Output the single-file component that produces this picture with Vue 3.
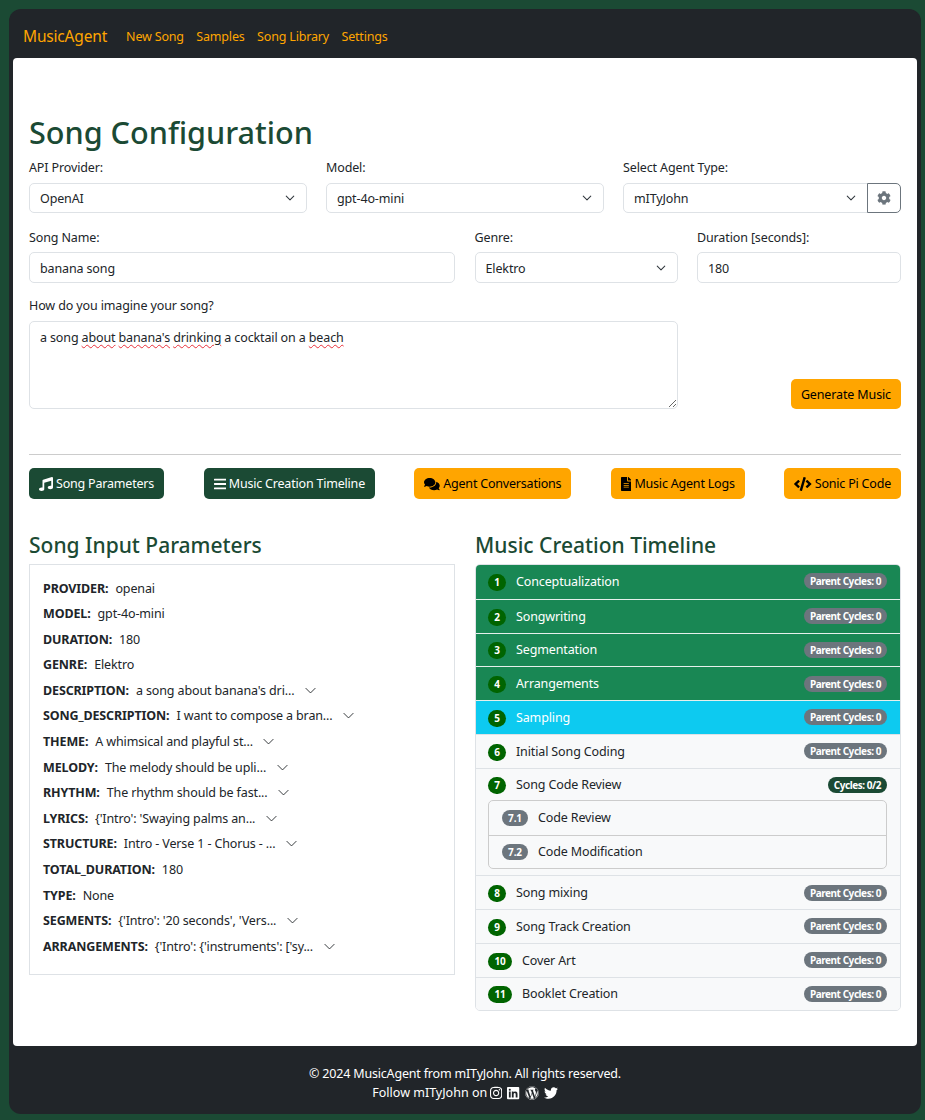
<script setup>
const fa = {
  music: { vb: '0 0 512 512', d: 'M511.99 32.01c0-21.71-21.1-37.01-41.6-30.51L150.4 96c-13.3 4.2-22.4 16.5-22.4 30.5v261.42c-10.05-2.38-20.72-3.92-32-3.92-53.02 0-96 28.65-96 64s42.98 64 96 64 96-28.65 96-64V214.31l256-75.02v184.63c-10.05-2.38-20.72-3.92-32-3.92-53.02 0-96 28.65-96 64s42.98 64 96 64 96-28.65 96-64l-.01-351.99z' },
  bars: { vb: '0 0 448 512', d: 'M16 132h416c8.837 0 16-7.163 16-16V76c0-8.837-7.163-16-16-16H16C7.163 60 0 67.163 0 76v40c0 8.837 7.163 16 16 16zm0 160h416c8.837 0 16-7.163 16-16v-40c0-8.837-7.163-16-16-16H16c-8.837 0-16 7.163-16 16v40c0 8.837 7.163 16 16 16zm0 160h416c8.837 0 16-7.163 16-16v-40c0-8.837-7.163-16-16-16H16c-8.837 0-16 7.163-16 16v40c0 8.837 7.163 16 16 16z' },
  comments: { vb: '0 0 576 512', d: 'M416 192c0-88.4-93.1-160-208-160S0 103.6 0 192c0 34.3 14.1 65.9 38 92-13.4 30.2-35.5 54.2-35.8 54.5-2.2 2.3-2.8 5.7-1.5 8.7S4.8 352 8 352c36.6 0 66.9-12.3 88.7-25 32.2 15.7 70.3 25 111.3 25 114.9 0 208-71.6 208-160zm122 220c23.9-26 38-57.7 38-92 0-66.9-53.5-124.2-129.3-148.1.9 6.6 1.3 13.3 1.3 20.1 0 105.9-107.7 192-240 192-10.8 0-21.3-.8-31.7-1.9C207.8 439.6 281.8 480 368 480c41 0 79.1-9.2 111.3-25 21.8 12.7 52.1 25 88.7 25 3.2 0 6.1-1.9 7.3-4.8 1.3-2.9.7-6.3-1.5-8.7-.3-.3-22.4-24.2-35.8-54.5z' },
  file: { vb: '0 0 384 512', d: 'M224 136V0H24C10.7 0 0 10.7 0 24v464c0 13.3 10.7 24 24 24h336c13.3 0 24-10.7 24-24V160H248c-13.2 0-24-10.8-24-24zm64 236c0 6.6-5.4 12-12 12H108c-6.6 0-12-5.4-12-12v-8c0-6.6 5.4-12 12-12h168c6.6 0 12 5.4 12 12v8zm0-64c0 6.6-5.4 12-12 12H108c-6.6 0-12-5.4-12-12v-8c0-6.6 5.4-12 12-12h168c6.6 0 12 5.4 12 12v8zm0-72v8c0 6.6-5.4 12-12 12H108c-6.6 0-12-5.4-12-12v-8c0-6.6 5.4-12 12-12h168c6.6 0 12 5.4 12 12zm96-114.1v6.1H256V0h6.1c6.4 0 12.5 2.5 17 7l97.9 98c4.5 4.5 7 10.6 7 16.9z' },
  code: { vb: '0 0 640 512', d: 'M278.9 511.5l-61-17.7c-6.4-1.8-10-8.5-8.2-14.9L346.2 8.7c1.8-6.4 8.5-10 14.9-8.2l61 17.7c6.4 1.8 10 8.5 8.2 14.9L293.8 503.3c-1.9 6.4-8.5 10.1-14.9 8.2zm-114-112.2l43.5-46.4c4.6-4.9 4.3-12.7-.8-17.2L117 256l90.6-79.7c5.1-4.5 5.5-12.3.8-17.2l-43.5-46.4c-4.5-4.8-12.1-5.1-17-.5L3.8 247.2c-5.1 4.7-5.1 12.8 0 17.5l144.1 135.1c4.9 4.6 12.5 4.4 17-.5zm327.2.6l144.1-135.1c5.1-4.7 5.1-12.8 0-17.5L492.1 112.1c-4.8-4.5-12.4-4.3-17 .5L431.6 159c-4.6 4.9-4.3 12.7.8 17.2L523 256l-90.6 79.7c-5.1 4.5-5.5 12.3-.8 17.2l43.5 46.4c4.5 4.9 12.1 5.1 17 .6z' },
  cog: { vb: '0 0 512 512', d: 'M487.4 315.7l-42.6-24.6c4.3-23.2 4.3-47 0-70.2l42.6-24.6c4.9-2.8 7.1-8.6 5.5-14-11.1-35.6-30-67.8-54.7-94.6-3.8-4.1-10-5.1-14.8-2.3L380.8 110c-17.9-15.4-38.5-27.3-60.8-35.1V25.8c0-5.6-3.9-10.5-9.4-11.7-36.7-8.2-74.3-7.8-109.2 0-5.5 1.2-9.4 6.1-9.4 11.7V75c-22.2 7.9-42.8 19.8-60.8 35.1L88.7 85.5c-4.9-2.8-11-1.9-14.8 2.3-24.7 26.7-43.6 58.9-54.7 94.6-1.7 5.4.6 11.2 5.5 14L67.3 221c-4.3 23.2-4.3 47 0 70.2l-42.6 24.6c-4.9 2.8-7.1 8.6-5.5 14 11.1 35.6 30 67.8 54.7 94.6 3.8 4.1 10 5.1 14.8 2.3l42.6-24.6c17.9 15.4 38.5 27.3 60.8 35.1v49.2c0 5.6 3.9 10.5 9.4 11.7 36.7 8.2 74.3 7.8 109.2 0 5.5-1.2 9.4-6.1 9.4-11.7v-49.2c22.2-7.9 42.8-19.8 60.8-35.1l42.6 24.6c4.9 2.8 11 1.9 14.8-2.3 24.7-26.7 43.6-58.9 54.7-94.6 1.5-5.5-.7-11.3-5.6-14.1zM256 336c-44.1 0-80-35.9-80-80s35.9-80 80-80 80 35.9 80 80-35.9 80-80 80z' },
  instagram: { vb: '0 0 448 512', d: 'M224.1 141c-63.6 0-114.9 51.3-114.9 114.9s51.3 114.9 114.9 114.9S339 319.5 339 255.9 287.7 141 224.1 141zm0 189.6c-41.1 0-74.7-33.5-74.7-74.7s33.5-74.7 74.7-74.7 74.7 33.5 74.7 74.7-33.6 74.7-74.7 74.7zm146.4-194.3c0 14.9-12 26.8-26.8 26.8-14.9 0-26.8-12-26.8-26.8s12-26.8 26.8-26.8 26.8 12 26.8 26.8zm76.1 27.2c-1.7-35.9-9.9-67.7-36.2-93.9-26.2-26.2-58-34.4-93.9-36.2-37-2.1-147.9-2.1-184.9 0-35.8 1.7-67.6 9.9-93.9 36.1s-34.4 58-36.2 93.9c-2.1 37-2.1 147.9 0 184.9 1.7 35.9 9.9 67.7 36.2 93.9s58 34.4 93.9 36.2c37 2.1 147.9 2.1 184.9 0 35.9-1.7 67.7-9.9 93.9-36.2 26.2-26.2 34.4-58 36.2-93.9 2.1-37 2.1-147.8 0-184.8zM398.8 388c-7.8 19.6-22.9 34.7-42.6 42.6-29.5 11.7-99.5 9-132.1 9s-102.7 2.6-132.1-9c-19.6-7.8-34.7-22.9-42.6-42.6-11.7-29.5-9-99.5-9-132.1s-2.6-102.7 9-132.1c7.8-19.6 22.9-34.7 42.6-42.6 29.5-11.7 99.5-9 132.1-9s102.7-2.6 132.1 9c19.6 7.8 34.7 22.9 42.6 42.6 11.7 29.5 9 99.5 9 132.1s2.7 102.7-9 132.1z' },
  linkedin: { vb: '0 0 448 512', d: 'M416 32H31.9C14.3 32 0 46.5 0 64.3v383.4C0 465.5 14.3 480 31.9 480H416c17.6 0 32-14.5 32-32.3V64.3c0-17.8-14.4-32.3-32-32.3zM135.4 416H69V202.2h66.5V416zm-33.2-243c-21.3 0-38.5-17.3-38.5-38.5S80.9 96 102.2 96c21.2 0 38.5 17.3 38.5 38.5 0 21.3-17.2 38.5-38.5 38.5zm282.1 243h-66.4V312c0-24.8-.5-56.7-34.5-56.7-34.6 0-39.9 27-39.9 54.9V416h-66.4V202.2h63.7v29.2h.9c8.9-16.8 30.6-34.5 62.9-34.5 67.2 0 79.7 44.3 79.7 101.9V416z' },
  wordpress: { vb: '0 0 512 512', d: 'M61.7 169.4l101.5 278C92.2 413 43.3 340.2 43.3 256c0-30.9 6.6-60.1 18.4-86.6zm337.9 75.9c0-26.3-9.4-44.5-17.5-58.7-10.8-17.5-20.9-32.4-20.9-49.9 0-19.6 14.8-37.8 35.7-37.8.9 0 1.8.1 2.8.2-37.9-34.7-88.3-55.9-143.7-55.9-74.3 0-139.7 38.1-177.8 95.9 5 .2 9.7.3 13.7.3 22.2 0 56.7-2.7 56.7-2.7 11.5-.7 12.8 16.2 1.4 17.5 0 0-11.5 1.3-24.3 2l77.5 230.4L249.8 247l-33.1-90.8c-11.5-.7-22.3-2-22.3-2-11.5-.7-10.1-18.2 1.3-17.5 0 0 35.1 2.7 56 2.7 22.2 0 56.7-2.7 56.7-2.7 11.5-.7 12.8 16.2 1.4 17.5 0 0-11.5 1.3-24.3 2l76.9 228.7 21.2-70.9c9-29.4 16-50.5 16-68.7zm-139.9 29.4l-63.8 185.5c19.1 5.6 39.2 8.7 60.1 8.7 24.8 0 48.5-4.3 70.6-12.1-.6-.9-1.1-1.9-1.5-2.9l-65.4-179.2zm183-120.7c.9 6.8 1.4 14 1.4 21.9 0 21.6-4 45.8-16.2 76.2l-65 187.9C426.2 403 468.7 334.5 468.7 256c0-37-9.4-71.8-26-102.1zM504 256c0 136.8-111.3 248-248 248C119.2 504 8 392.7 8 256 8 119.2 119.2 8 256 8c136.7 0 248 111.2 248 248zm-11.4 0c0-130.5-106.2-236.6-236.6-236.6C125.5 19.4 19.4 125.5 19.4 256S125.6 492.6 256 492.6c130.5 0 236.6-106.1 236.6-236.6z' },
  twitter: { vb: '0 0 512 512', d: 'M459.37 151.716c.325 4.548.325 9.097.325 13.645 0 138.72-105.583 298.558-298.558 298.558-59.452 0-114.68-17.219-161.137-47.106 8.447.974 16.568 1.299 25.34 1.299 49.055 0 94.213-16.568 130.274-44.832-46.132-.975-84.792-31.188-98.112-72.772 6.498.974 12.995 1.624 19.818 1.624 9.421 0 18.843-1.3 27.614-3.573-48.081-9.747-84.143-51.98-84.143-102.985v-1.299c13.969 7.797 30.214 12.67 47.431 13.319-28.264-18.843-46.781-51.005-46.781-87.391 0-19.492 5.197-37.36 14.294-52.954 51.655 63.675 129.3 105.258 216.365 109.807-1.624-7.797-2.599-15.918-2.599-24.04 0-57.828 46.782-104.934 104.934-104.934 30.213 0 57.502 12.67 76.67 33.137 23.715-4.548 46.456-13.32 66.599-25.34-7.798 24.366-24.366 44.833-46.132 57.827 21.117-2.273 41.584-8.122 60.426-16.243-14.292 20.791-32.161 39.308-52.628 54.253z' }
}

const tabs = [
  { label: 'Song Parameters', icon: 'music', dark: true },
  { label: 'Music Creation Timeline', icon: 'bars', dark: true },
  { label: 'Agent Conversations', icon: 'comments', dark: false },
  { label: 'Music Agent Logs', icon: 'file', dark: false },
  { label: 'Sonic Pi Code', icon: 'code', dark: false }
]

const params = [
  ['PROVIDER', 'openai', false],
  ['MODEL', 'gpt-4o-mini', false],
  ['DURATION', '180', false],
  ['GENRE', 'Elektro', false],
  ['DESCRIPTION', "a song about banana's dri...", true],
  ['SONG_DESCRIPTION', 'I want to compose a bran...', true],
  ['THEME', 'A whimsical and playful st...', true],
  ['MELODY', 'The melody should be upli...', true],
  ['RHYTHM', 'The rhythm should be fast...', true],
  ['LYRICS', "{'Intro': 'Swaying palms an...", true],
  ['STRUCTURE', 'Intro - Verse 1 - Chorus - ...', true],
  ['TOTAL_DURATION', '180', false],
  ['TYPE', 'None', false],
  ['SEGMENTS', "{'Intro': '20 seconds', 'Vers...", true],
  ['ARRANGEMENTS', "{'Intro': {'instruments': ['sy...", true]
]

const steps = [
  { n: 1, name: 'Conceptualization', state: 'done' },
  { n: 2, name: 'Songwriting', state: 'done' },
  { n: 3, name: 'Segmentation', state: 'done' },
  { n: 4, name: 'Arrangements', state: 'done' },
  { n: 5, name: 'Sampling', state: 'active' },
  { n: 6, name: 'Initial Song Coding', state: '' },
  { n: 7, name: 'Song Code Review', state: '', cycles: 'Cycles: 0/2', subs: [['7.1', 'Code Review'], ['7.2', 'Code Modification']] },
  { n: 8, name: 'Song mixing', state: '' },
  { n: 9, name: 'Song Track Creation', state: '' },
  { n: 10, name: 'Cover Art', state: '' },
  { n: 11, name: 'Booklet Creation', state: '' }
]
</script>

<template>
  <div class="shell">
    <nav class="nav">
      <a class="brand">MusicAgent</a>
      <a class="link">New Song</a>
      <a class="link">Samples</a>
      <a class="link">Song Library</a>
      <a class="link">Settings</a>
    </nav>

    <main class="card">
      <h1>Song Configuration</h1>

      <div class="row row-3">
        <div class="field">
          <label>API Provider:</label>
          <select class="control"><option>OpenAI</option></select>
        </div>
        <div class="field">
          <label>Model:</label>
          <select class="control"><option>gpt-4o-mini</option></select>
        </div>
        <div class="field">
          <label>Select Agent Type:</label>
          <div class="group">
            <select class="control joined"><option>mITyJohn</option></select>
            <button class="gear" type="button">
              <svg :viewBox="fa.cog.vb" width="14" height="14"><path :d="fa.cog.d" fill="#6c757d" /></svg>
            </button>
          </div>
        </div>
      </div>

      <div class="row row-name">
        <div class="field">
          <label class="tight">Song Name:</label>
          <input class="control tall" value="banana song" />
        </div>
        <div class="field">
          <label class="tight">Genre:</label>
          <select class="control tall"><option>Elektro</option></select>
        </div>
        <div class="field">
          <label class="tight">Duration [seconds]:</label>
          <input class="control tall" value="180" />
        </div>
      </div>

      <div class="row row-desc">
        <div class="field">
          <label>How do you imagine your song?</label>
          <div class="textarea">a song <span class="sp">about</span> <span class="sp">banana's</span> <span class="sp">drinking</span> a cocktail on a <span class="sp">beach</span></div>
        </div>
        <div class="gen-wrap">
          <button class="btn orange short" type="button">Generate Music</button>
        </div>
      </div>

      <hr />

      <div class="tabs">
        <button v-for="t in tabs" :key="t.label" class="btn" :class="t.dark ? 'green' : 'orange'" type="button">
          <svg :viewBox="fa[t.icon].vb" height="14" :width="14 * parseInt(fa[t.icon].vb.split(' ')[2]) / 512" class="ti"><path :d="fa[t.icon].d" fill="currentColor" /></svg>
          {{ t.label }}
        </button>
      </div>

      <div class="cols">
        <section>
          <h2>Song Input Parameters</h2>
          <div class="params">
            <div v-for="p in params" :key="p[0]" class="param">
              <b>{{ p[0] }}:</b>
              <span class="val">{{ p[1] }}</span>
              <svg v-if="p[2]" class="chev" viewBox="0 0 16 16" width="13" height="13"><path d="M2 5l6 6 6-6" fill="none" stroke="#212529" stroke-width="1.1" /></svg>
            </div>
          </div>
        </section>

        <section>
          <h2>Music Creation Timeline</h2>
          <ul class="timeline">
            <li v-for="s in steps" :key="s.n" class="step" :class="s.state">
              <div class="step-head">
                <span class="num" :class="{ wide: s.n > 9 }">{{ s.n }}</span>
                <span class="step-name">{{ s.name }}</span>
                <span class="badge" :class="{ cyc: s.cycles }">{{ s.cycles || 'Parent Cycles: 0' }}</span>
              </div>
              <ul v-if="s.subs" class="subs">
                <li v-for="u in s.subs" :key="u[0]" class="sub">
                  <span class="subnum">{{ u[0] }}</span>{{ u[1] }}
                </li>
              </ul>
            </li>
          </ul>
        </section>
      </div>
    </main>

    <footer class="foot">
      <div class="rights">© 2024 MusicAgent from mITyJohn. All rights reserved.</div>
      <div class="follow">
        Follow mITyJohn on
        <svg v-for="k in ['instagram', 'linkedin', 'wordpress', 'twitter']" :key="k" :viewBox="fa[k].vb" height="14" :width="14 * parseInt(fa[k].vb.split(' ')[2]) / 512" class="si"><path :d="fa[k].d" fill="#fff" /></svg>
      </div>
    </footer>
  </div>
</template>

<style>
html, body { margin: 0; background: #1b4a34; }
</style>

<style scoped>
.shell {
  box-sizing: border-box;
  margin: 9px 4px 6px 9px;
  height: 1105px;
  background: #212529;
  border-radius: 12px;
  padding: 0 4px;
  display: flex;
  flex-direction: column;
  font-family: "Noto Sans", "Open Sans", sans-serif;
  font-size: 12.5px;
  line-height: 21px;
  letter-spacing: -0.13px;
  color: #212529;
}
.nav {
  height: 49px;
  display: flex;
  align-items: center;
  padding: 5px 0 0 10px;
  box-sizing: border-box;
  color: #ffa500;
  letter-spacing: -0.18px;
}
.brand { font-size: 15.5px; margin-right: 19px; }
.link { margin-right: 12.5px; }
.card {
  flex: 1;
  background: #fff;
  border-radius: 4px;
  padding: 51px 16px 0;
}
h1 {
  margin: 0 0 2px;
  font-size: 30.6px;
  line-height: 46px;
  font-weight: 500;
  letter-spacing: 0;
  color: #1b4a34;
}
.row { display: grid; column-gap: 19px; }
.row-3 { grid-template-columns: repeat(3, 1fr); }
.row-name { grid-template-columns: 426px 203px 204px; margin-top: 14px; column-gap: 19.5px; }
.row-desc { grid-template-columns: 649px 1fr; margin-top: 12px; }
label { display: block; height: 21px; margin-bottom: 5px; }
label.tight { margin-bottom: 4px; }
.control {
  display: block;
  box-sizing: border-box;
  width: 100%;
  height: 30px;
  padding: 0 10px;
  border: 1px solid #dee2e6;
  border-radius: 5px;
  background-color: #fff;
  font: inherit;
  letter-spacing: inherit;
  color: #212529;
}
.tall { height: 31px; padding-top: 1px; }
select.control {
  appearance: none;
  background-image: url("data:image/svg+xml,%3csvg xmlns='http://www.w3.org/2000/svg' viewBox='0 0 16 16'%3e%3cpath fill='none' stroke='%23343a40' stroke-linecap='round' stroke-linejoin='round' stroke-width='1.7' d='m2 5 6 6 6-6'/%3e%3c/svg%3e");
  background-repeat: no-repeat;
  background-position: right 9px center;
  background-size: 14px 10px;
}
.group { display: flex; }
.joined { border-radius: 5px 0 0 5px; flex: 1; min-width: 0; }
.gear {
  width: 34px;
  height: 30px;
  box-sizing: border-box;
  margin-left: -1px;
  padding: 0;
  border: 1px solid #6c757d;
  border-radius: 0 5px 5px 0;
  background: #fff;
  display: flex;
  align-items: center;
  justify-content: center;
}
.textarea {
  box-sizing: border-box;
  height: 88px;
  padding: 5px 10px;
  border: 1px solid #dee2e6;
  border-radius: 5px;
  overflow: auto;
  resize: vertical;
}
.sp { text-decoration: underline wavy #e8303a 1px; text-underline-offset: 2px; }
.gen-wrap { display: flex; justify-content: flex-end; align-items: flex-end; }
.btn {
  height: 31px;
  box-sizing: border-box;
  padding: 0 10px;
  border: 0;
  border-radius: 5px;
  font: inherit;
  letter-spacing: inherit;
  white-space: nowrap;
  display: inline-flex;
  align-items: center;
  gap: 3px;
}
.short { height: 30px; }
.orange { background: #ffa500; color: #000; }
.green { background: #1b4a34; color: #fff; }
hr { margin: 45px 0 13px; border: 0; border-top: 1px solid #ccc; }
.tabs { display: flex; justify-content: space-between; letter-spacing: -0.2px; }
.cols { display: grid; grid-template-columns: 426px 426px; column-gap: 20px; margin-top: 30px; }
h2 {
  margin: 0 0 2px;
  font-size: 21px;
  line-height: 33px;
  font-weight: 500;
  letter-spacing: 0;
  color: #1b4a34;
}
.params {
  box-sizing: border-box;
  height: 411px;
  border: 1px solid #dee2e6;
  padding: 12.5px 13px 0;
}
.param {
  height: 25.6px;
  display: flex;
  align-items: flex-start;
  white-space: nowrap;
}
.param b { font-weight: 700; margin-right: 7px; }
.chev { margin: 4px 0 0 9.5px; }
.timeline, .subs { list-style: none; margin: 0; padding: 0; }
.timeline {
  border: 1px solid #dee2e6;
  border-radius: 5px;
  overflow: hidden;
}
.step {
  background: #f8f9fa;
  padding: 5.75px 13px 6px 12px;
  border-top: 1px solid #dee2e6;
  min-height: 33.75px;
  box-sizing: border-box;
}
.step:first-child { border-top: 0; }
.step.done { background: #198754; color: #fff; border-top-color: #e6f0ec; }
.step.active { background: #0dcaf0; color: #fff; border-top-color: #e6f0ec; }
.step-head { display: flex; align-items: center; height: 21px; }
.num {
  width: 18px;
  height: 17px;
  border-radius: 9px;
  background: #006400;
  color: #fff;
  font-size: 10px;
  font-weight: 700;
  line-height: 17px;
  text-align: center;
  margin-right: 10px;
  margin-top: 2px;
}
.num.wide { width: 24px; }
.step-name { flex: 1; }
.badge {
  height: 16px;
  padding: 0 6px;
  border-radius: 8px;
  background: #6c757d;
  color: #fff;
  font-size: 10px;
  font-weight: 700;
  line-height: 16px;
  letter-spacing: -0.45px;
}
.badge.cyc { background: #1b4a34; }
.subs {
  margin-top: 5px;
  border: 1px solid #ccc;
  border-radius: 5px;
}
.sub {
  height: 33.5px;
  display: flex;
  align-items: center;
  padding: 0 0 1px 13px;
  box-sizing: border-box;
}
.sub + .sub { border-top: 1px solid #ccc; }
.subnum {
  width: 26px;
  height: 16px;
  border-radius: 8px;
  background: #6c757d;
  color: #fff;
  font-size: 10px;
  font-weight: 700;
  line-height: 16px;
  text-align: center;
  margin-right: 10px;
}
.foot {
  height: 68px;
  box-sizing: border-box;
  padding-top: 18px;
  text-align: center;
  color: #fff;
  line-height: 19px;
}
.rights { letter-spacing: -0.18px; }
.follow { display: flex; justify-content: center; align-items: center; letter-spacing: 0; }
.si { margin-left: 5px; }
.si:first-of-type { margin-left: 3px; }
</style>
